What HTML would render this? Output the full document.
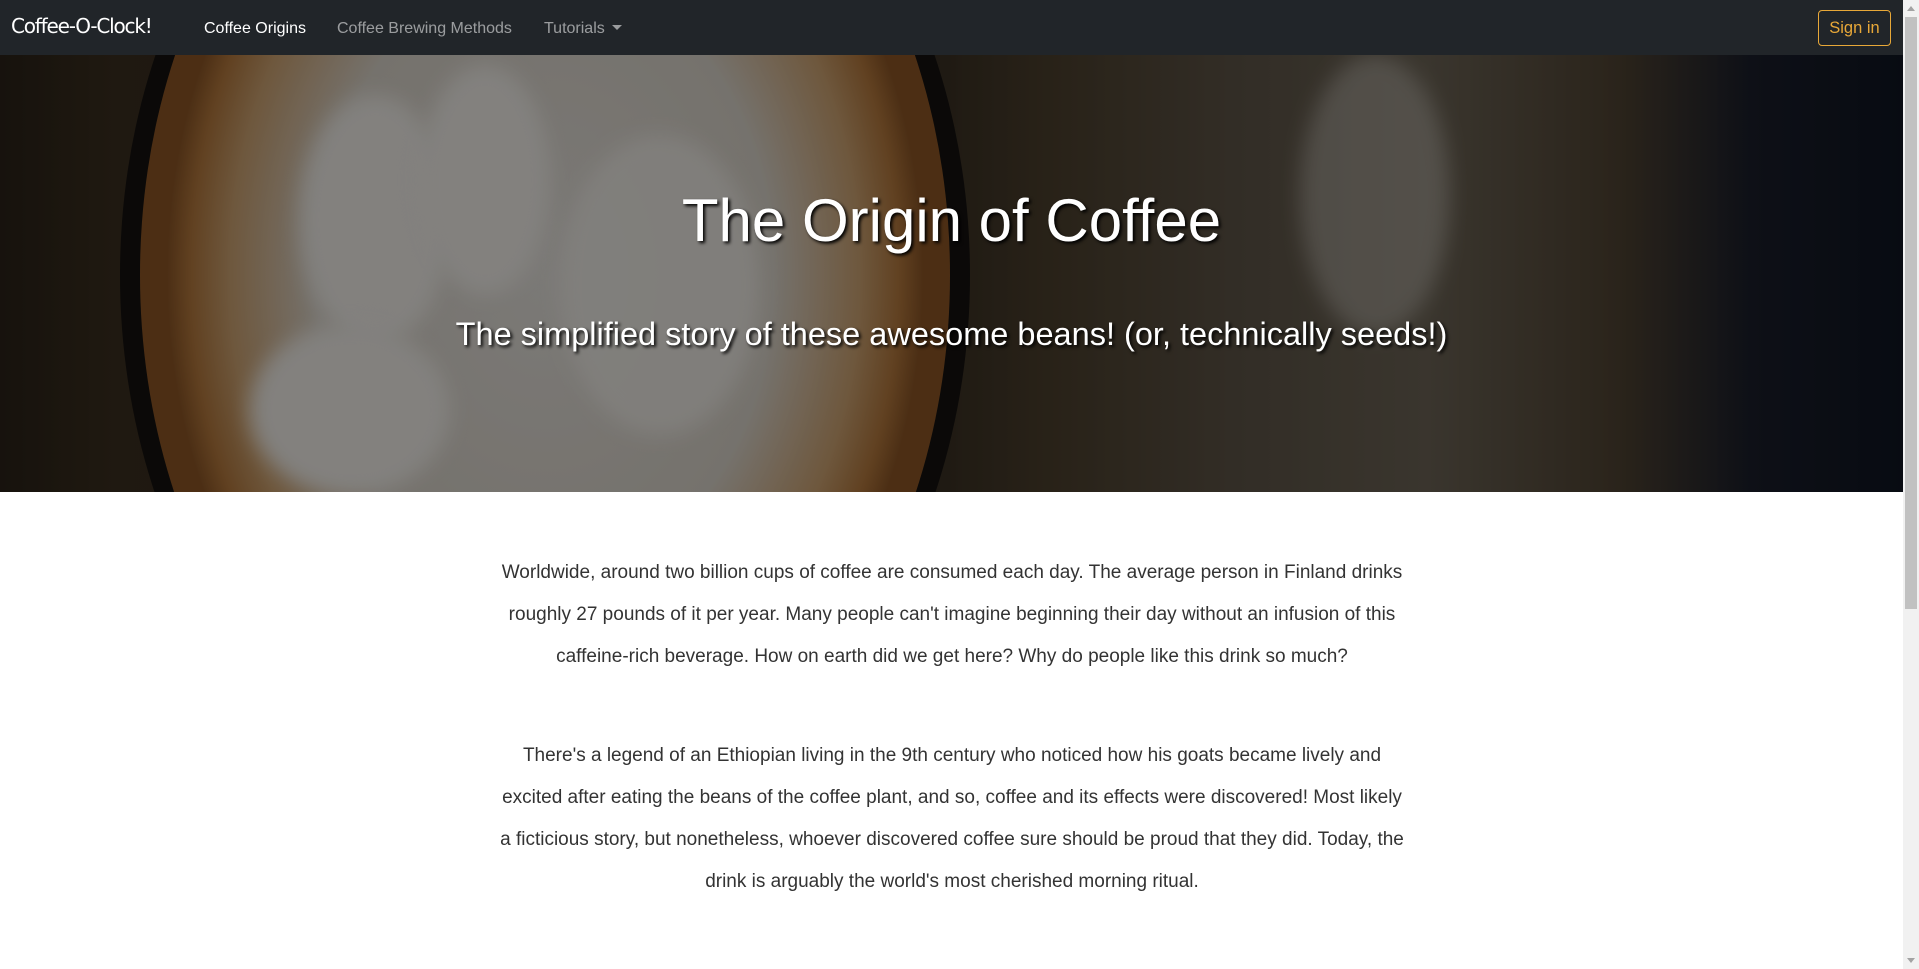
<!DOCTYPE html>
<html><head><meta charset="utf-8"><style>
*{box-sizing:border-box;margin:0;padding:0}
html,body{width:1919px;height:969px;overflow:hidden;background:#fff;font-family:"Liberation Sans",sans-serif}
.nav{position:absolute;left:0;top:0;width:1903px;height:55px;background:#212529}
.brand{position:absolute;left:11px;top:14px;color:#fff;font-family:"Comic Sans MS","DejaVu Sans",cursive;font-size:20px;letter-spacing:-1.2px}
.nl{position:absolute;top:20px;font-size:16px;color:rgba(255,255,255,.55)}
.caret{display:inline-block;border-top:5px solid rgba(255,255,255,.55);border-left:5px solid transparent;border-right:5px solid transparent;margin-left:7px;vertical-align:3px}
.btn{position:absolute;left:1818px;top:10px;width:73px;height:36px;border:1px solid #e8a838;border-radius:4px;color:#e8a838;font-size:16.5px;text-align:center;line-height:34px}
.sb{position:absolute;left:1903px;top:0;width:16px;height:969px;background:#f1f1f1}
.sb .th{position:absolute;left:2px;top:17px;width:12px;height:592px;background:#c1c1c1}
.sb .up{position:absolute;left:4px;top:6px;border-bottom:5px solid #a3a3a3;border-left:4px solid transparent;border-right:4px solid transparent}
.sb .dn{position:absolute;left:4px;top:958px;border-top:5px solid #a3a3a3;border-left:4px solid transparent;border-right:4px solid transparent}
.hero{position:absolute;left:0;top:55px;width:1903px;height:437px;overflow:hidden;background:linear-gradient(90deg,#2a2218 0%,#3a2e1f 6%,#2b241c 45%,#4a3e2c 55%,#5c5346 65%,#6a6254 75%,#4e4232 85%,#1a1e2a 92%,#0f1522 100%)}
.cup{position:absolute;left:120px;top:-330px;width:850px;height:1100px;border-radius:50%;background:#141210}
.crema{position:absolute;left:140px;top:-320px;width:810px;height:1080px;border-radius:50%;background:radial-gradient(ellipse at 50% 50%,#e0ddd8 0%,#d6d0c6 40%,#c9a070 55%,#b0763c 62%,#8a5526 66%)}
.foam{position:absolute;border-radius:50%;background:#eeebe6;filter:blur(10px)}
.ov{position:absolute;inset:0;background:rgba(0,0,0,.45)}
h1{position:absolute;left:0;width:1903px;top:186px;text-align:center;color:#fff;font-weight:300;font-size:60px;text-shadow:2px 2px 3px #000}
h2{position:absolute;left:0;width:1903px;top:316px;text-align:center;color:#fff;font-weight:300;font-size:32.5px;text-shadow:2px 2px 3px #000}
.c{position:absolute;left:452px;width:1000px;text-align:center;color:#333;font-size:19px;line-height:42px}
</style></head><body>
<div class="nav">
<div class="brand">Coffee-O-Clock!</div>
<div class="nl" style="left:204px;color:#fff">Coffee Origins</div>
<div class="nl" style="left:337px">Coffee Brewing Methods</div>
<div class="nl" style="left:544px">Tutorials<span class="caret"></span></div>
<div class="btn">Sign in</div>
</div>
<div class="hero">
<div class="cup"></div>
<div class="crema"></div>
<div class="foam" style="left:300px;top:40px;width:150px;height:250px"></div>
<div class="foam" style="left:420px;top:10px;width:130px;height:230px"></div>
<div class="foam" style="left:250px;top:270px;width:200px;height:170px"></div>
<div class="foam" style="left:560px;top:80px;width:200px;height:300px;opacity:.8"></div>
<div class="foam" style="left:1300px;top:0px;width:150px;height:280px;opacity:.35"></div>
<div class="ov"></div>
</div>
<h1>The Origin of Coffee</h1>
<h2>The simplified story of these awesome beans! (or, technically seeds!)</h2>
<p class="c" style="top:552px">Worldwide, around two billion cups of coffee are consumed each day. The average person in Finland drinks<br>roughly 27 pounds of it per year. Many people can't imagine beginning their day without an infusion of this<br>caffeine-rich beverage. How on earth did we get here? Why do people like this drink so much?</p>
<p class="c" style="top:735px">There's a legend of an Ethiopian living in the 9th century who noticed how his goats became lively and<br>excited after eating the beans of the coffee plant, and so, coffee and its effects were discovered! Most likely<br>a ficticious story, but nonetheless, whoever discovered coffee sure should be proud that they did. Today, the<br>drink is arguably the world's most cherished morning ritual.</p>
<div class="sb"><div class="up"></div><div class="th"></div><div class="dn"></div></div>
</body></html>
